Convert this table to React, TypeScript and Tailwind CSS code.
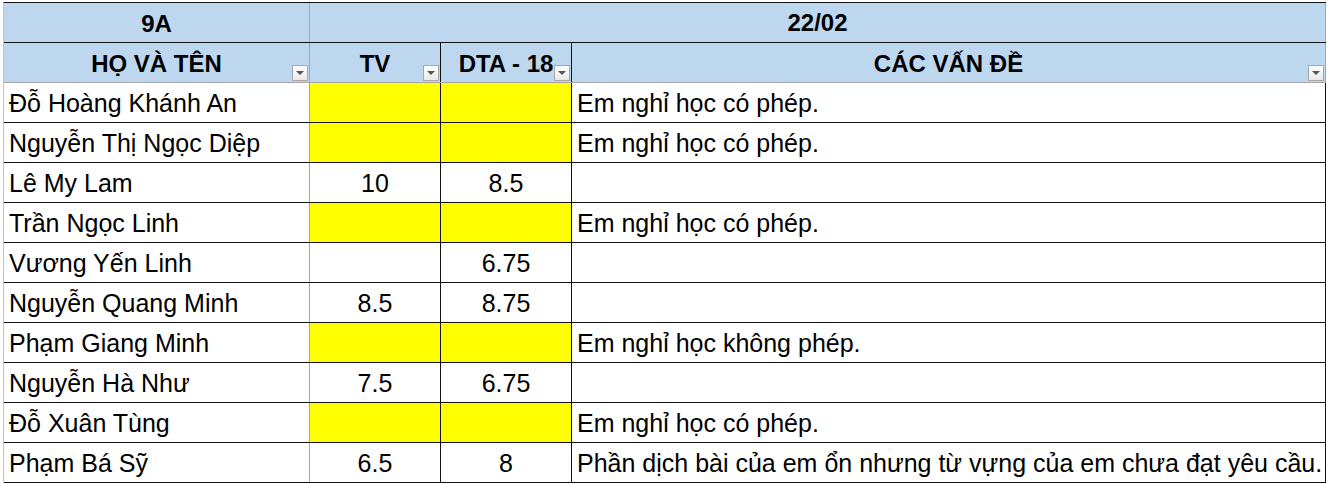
import React from "react";

type Row = { name: string; tv: string; dta: string; note: string; absent?: boolean };

const rows: Row[] = [
  { name: "Đỗ Hoàng Khánh An", tv: "", dta: "", note: "Em nghỉ học có phép.", absent: true },
  { name: "Nguyễn Thị Ngọc Diệp", tv: "", dta: "", note: "Em nghỉ học có phép.", absent: true },
  { name: "Lê My Lam", tv: "10", dta: "8.5", note: "" },
  { name: "Trần Ngọc Linh", tv: "", dta: "", note: "Em nghỉ học có phép.", absent: true },
  { name: "Vương Yến Linh", tv: "", dta: "6.75", note: "" },
  { name: "Nguyễn Quang Minh", tv: "8.5", dta: "8.75", note: "" },
  { name: "Phạm Giang Minh", tv: "", dta: "", note: "Em nghỉ học không phép.", absent: true },
  { name: "Nguyễn Hà Như", tv: "7.5", dta: "6.75", note: "" },
  { name: "Đỗ Xuân Tùng", tv: "", dta: "", note: "Em nghỉ học có phép.", absent: true },
  {
    name: "Phạm Bá Sỹ",
    tv: "6.5",
    dta: "8",
    note: "Phần dịch bài của em ổn nhưng từ vựng của em chưa đạt yêu cầu.",
  },
];

function FilterButton() {
  return (
    <div className="absolute right-[1px] bottom-[1px] w-[16px] h-[16px] border border-[#a8a8a8] bg-gradient-to-b from-[#ffffff] to-[#e9e9e9] flex items-center justify-center">
      <div className="w-0 h-0 border-l-[4px] border-r-[4px] border-t-[4px] border-l-transparent border-r-transparent border-t-[#555555]" />
    </div>
  );
}

export default function App() {
  return (
    <div
      className="w-[1330px] h-[484px] bg-white overflow-hidden pt-[2px] text-black"
      style={{ fontFamily: '"Liberation Sans", Arial, sans-serif' }}
    >
      <div className="ml-[3px] w-[1323px] border-l border-[#c6c6c6] border-t border-t-[#111111]">
        {/* Row 1 */}
        <div className="flex h-[40px] border-b border-[#111111] bg-[#bdd7ee] font-bold text-[24px]">
          <div className="w-[306px] border-r border-[#a6a6a6] flex items-center justify-center pt-[2px]">
            9A
          </div>
          <div className="w-[1016px] border-r border-[#a6a6a6] flex items-center justify-center pt-[1px]">
            22/02
          </div>
        </div>
        {/* Row 2 */}
        <div className="flex h-[40px] border-b border-[#a6a6a6] bg-[#bdd7ee] font-bold text-[24px]">
          <div className="relative w-[306px] border-r border-[#a6a6a6] flex items-center justify-center pt-[2px]">
            HỌ VÀ TÊN
            <FilterButton />
          </div>
          <div className="relative w-[131px] border-r border-[#111111] flex items-center justify-center pt-[2px]">
            TV
            <FilterButton />
          </div>
          <div className="relative w-[131px] border-r border-[#111111] flex items-center justify-center pt-[2px]">
            DTA - 18
            <FilterButton />
          </div>
          <div className="relative w-[754px] border-r border-[#a6a6a6] flex items-center justify-center pt-[2px]">
            CÁC VẤN ĐỀ
            <FilterButton />
          </div>
        </div>
        {/* Data rows */}
        {rows.map((r, i) => (
          <div key={i} className="flex h-[40px] border-b border-[#111111] text-[25px]">
            <div className="w-[306px] border-r border-[#a6a6a6] flex items-center pl-[5px] pt-[2px] whitespace-nowrap">
              {r.name}
            </div>
            <div
              className={`w-[131px] border-r border-[#111111] flex items-center justify-center pt-[2px] ${
                r.absent ? "bg-[#ffff00]" : "bg-white"
              }`}
            >
              {r.tv}
            </div>
            <div
              className={`w-[131px] border-r border-[#111111] flex items-center justify-center pt-[2px] ${
                r.absent ? "bg-[#ffff00]" : "bg-white"
              }`}
            >
              {r.dta}
            </div>
            <div className="w-[754px] border-r border-[#111111] flex items-center pl-[5px] pt-[2px] whitespace-nowrap overflow-hidden">
              {r.note}
            </div>
          </div>
        ))}
      </div>
    </div>
  );
}
